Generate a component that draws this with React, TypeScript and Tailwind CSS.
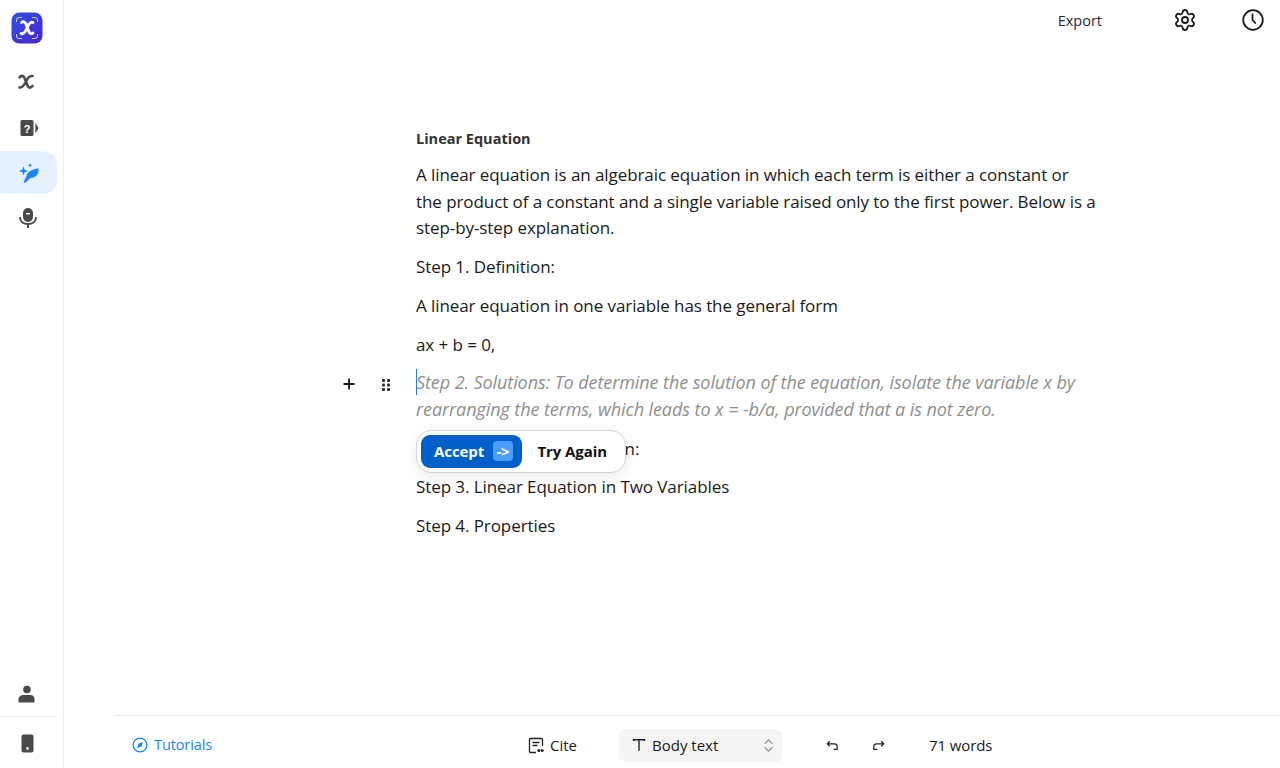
import { ChevronsUpDown, Settings } from "lucide-react";

const bodyFont = "font-['Open_Sans','Noto_Sans',sans-serif]";

function Logo() {
  return (
    <svg width="32" height="32" viewBox="0 0 32 32">
      <defs>
        <linearGradient id="logoFill" x1="0" y1="0" x2="1" y2="1">
          <stop offset="0" stopColor="#2f52e8" />
          <stop offset="1" stopColor="#4a22d0" />
        </linearGradient>
      </defs>
      <rect x="0.500" y="0.500" width="31" height="31" rx="8" fill="url(#logoFill)" />
      <path d="M5.500 10V8a2.500 2.500 0 0 1 2.500-2.500h3M21 5.500h3a2.500 2.500 0 0 1 2.500 2.500v2M26.500 22v2a2.500 2.500 0 0 1-2.500 2.500h-3M11 26.500H8a2.500 2.500 0 0 1-2.500-2.500v-2" fill="none" stroke="#c9d4ff" strokeWidth="1" />
      <path d="M10.500 10.500c2-1.500 3.500-.5 4.500 1.500l3 8c1 2 2.500 2 4 1M22 10.500c-2.500-1-4 .5-6 5.500s-3.500 6.500-6 5.500" fill="none" stroke="#fff" strokeWidth="2.800" strokeLinecap="round" />
    </svg>
  );
}

function SideButton({ active, children }: { active?: boolean; children: React.ReactNode }) {
  return (
    <div className={`w-[57px] h-[43px] flex items-center justify-center rounded-r-[14px] ${active ? "bg-[#e6f1ff]" : ""}`}>
      {children}
    </div>
  );
}

export default function App() {
  return (
    <div className={`flex h-screen w-full overflow-hidden bg-white text-[#1a1a1a] ${bodyFont}`}>
      {/* sidebar */}
      <aside className="w-16 shrink-0 border-r border-[#ededed] flex flex-col">
        <div className="h-[45px] pt-[12px] pl-[11px]">
          <Logo />
        </div>
        <div className="mt-[16px] flex flex-col gap-[2px]">
          <SideButton>
            <svg width="16" height="17" viewBox="0 0 16 17" className="-ml-[6px] -mt-[2px]">
              <path d="M1.500 4.500C3 2 5.500 2.500 6.500 5l3 7.500c1 2.500 3 3 5 .5M14.500 3C12 2.500 10.500 3.500 8 8.500s-4 6.500-6.500 6" fill="none" stroke="#4a4a4a" strokeWidth="2.600" strokeLinecap="round" />
            </svg>
          </SideButton>
          <SideButton>
            <svg width="19" height="18" viewBox="0 0 19 18" className="ml-[1px]">
              <rect x="0.500" y="1" width="13" height="16" rx="1.500" fill="#4a4a4a" />
              <text x="7" y="13.500" textAnchor="middle" fontSize="11" fontWeight="700" fill="#fff" fontFamily="Liberation Sans">?</text>
              <path d="M15 4c2 2 3 4 3.500 5-.5 1.500-1.500 3.500-3.500 5 .6-3 .6-7 0-10z" fill="#4a4a4a" />
            </svg>
          </SideButton>
          <SideButton active>
            <svg width="22" height="22" viewBox="0 0 22 22">
              <path d="M20.500 6.500c.5 6-3 9.500-8 9.500L7 21l-1.500-.8L8.300 14.500c.5-4.500 6-7.500 12.200-8z" fill="#1a86ff" />
              <path d="M5.500 4.500l1.200 3.300 3.300 1.200-3.300 1.200-1.200 3.300-1.200-3.300L1 9l3.300-1.200z" fill="#1a86ff" />
              <path d="M12 1l.6 1.700 1.700.6-1.700.6-.6 1.700-.6-1.700-1.700-.6 1.700-.6z" fill="#1a86ff" />
            </svg>
          </SideButton>
          <SideButton>
            <svg width="20" height="22" viewBox="0 0 20 22" className="-ml-[2px]">
              <rect x="5" y="1" width="10" height="14" rx="5" fill="#4a4a4a" />
              <rect x="8" y="6" width="4" height="1.400" fill="#fff" />
              <path d="M2 10c0 4 3 7 8 7s8-3 8-7" fill="none" stroke="#4a4a4a" strokeWidth="2" />
              <rect x="9" y="17" width="2" height="4" fill="#4a4a4a" />
            </svg>
          </SideButton>
        </div>
        <div className="mt-auto flex flex-col items-center w-[54px]">
          <div className="h-[46px] w-full flex items-center justify-center pt-[2px]">
            <svg width="18" height="18" viewBox="0 0 18 18">
              <circle cx="9" cy="4.500" r="3.800" fill="#4a4a4a" />
              <path d="M0.500 17.500v-3c0-3 2.500-4.500 5-4.500h7c2.500 0 4 1.500 4 4.500v3z" fill="#4a4a4a" />
            </svg>
          </div>
          <div className="w-[57px] self-start border-b border-[#ededed]" />
          <div className="h-[51px] w-full flex items-center justify-center pt-[2px]">
            <svg width="13" height="19" viewBox="0 0 13 19">
              <rect x="0.500" y="0.500" width="12" height="18" rx="2" fill="#4a4a4a" />
              <circle cx="6.500" cy="14.500" r="1.400" fill="#fff" />
            </svg>
          </div>
        </div>
      </aside>

      <main className="flex-1 min-w-0 flex flex-col">
        {/* top bar */}
        <header className="h-[40px] flex items-center justify-end pr-[15px] shrink-0">
          <span className="text-[14.500px] text-[#1f2a3a] mr-[71px] mt-[1px]">Export</span>
          <Settings size={24} strokeWidth={1.800} className="mr-[44px] text-[#1a1a1a]" />
          <svg width="24" height="24" viewBox="0 0 24 24" fill="none" stroke="#1a1a1a" strokeWidth="1.800" strokeLinecap="round">
            <circle cx="12" cy="12" r="9.800" />
            <path d="M11.500 6.500V12l2.800 3" />
          </svg>
        </header>

        {/* document */}
        <section className="flex-1 pl-[352px] pt-[86px] w-[1033px]">
          <h1 className="text-[14.500px] font-bold leading-[26px] text-[#333] mb-[10px]">Linear Equation</h1>
          <div className="text-[17px] tracking-[-0.08px] leading-[26.600px] flex flex-col gap-[12.200px]">
            <p>A linear equation is an algebraic equation in which each term is either a constant or the product of a constant and a single variable raised only to the first power. Below is a step-by-step explanation.</p>
            <p>Step 1. Definition:</p>
            <p>A linear equation in one variable has the general form</p>
            <p>ax + b = 0,</p>
            <div className="relative">
              <span className="absolute left-[-74px] top-[5px]">
                <svg width="14" height="14" viewBox="0 0 14 14" className="mt-[2px]">
                  <path d="M7 1.500v11M1.500 7h11" stroke="#1a1a1a" strokeWidth="1.800" />
                </svg>
              </span>
              <span className="absolute left-[-34px] top-[9px]">
                <svg width="8" height="12" viewBox="0 0 8 12" fill="#333">
                  <rect x="0" y="0" width="3" height="3" rx="0.800" />
                  <rect x="5" y="0" width="3" height="3" rx="0.800" />
                  <rect x="0" y="4.500" width="3" height="3" rx="0.800" />
                  <rect x="5" y="4.500" width="3" height="3" rx="0.800" />
                  <rect x="0" y="9" width="3" height="3" rx="0.800" />
                  <rect x="5" y="9" width="3" height="3" rx="0.800" />
                </svg>
              </span>
              <span className="absolute left-0 top-[-1px] w-px h-[26px] bg-[#2a7de1]" />
              <p className="italic text-[18px] text-[#8f8f8f] -mt-px mb-px">Step 2. Solutions: To determine the solution of the equation, isolate the variable x by rearranging the terms, which leads to x = -b/a, provided that a is not zero.</p>
            </div>
            <div className="relative">
              <p className="tracking-[0.1px]">Step 2. Finding the Solution:</p>
              <div className="absolute left-0 top-[-6px] w-[210px] h-[43px] bg-white border border-[#d4d4d4] rounded-[15px] shadow-[0_4px_12px_rgba(0,0,0,0.08)] flex items-center pl-[4px] pr-[18px] justify-between">
                <div className="h-[33px] w-[101px] bg-[#0060c9] rounded-[9px] flex items-center justify-between pl-[13px] pr-[9px] text-white text-[15px] font-bold">
                  <span>Accept</span>
                  <span className="w-[20px] h-[20px] rounded-[4px] bg-[#4b9dfb] flex items-center justify-center text-[15px] leading-none">-&gt;</span>
                </div>
                <span className="text-[15px] font-bold text-[#111]">Try Again</span>
              </div>
            </div>
            <p>Step 3. Linear Equation in Two Variables</p>
            <p>Step 4. Properties</p>
          </div>
        </section>

        {/* bottom bar */}
        <footer className="ml-[52px] h-[53px] shrink-0 border-t border-[#e8e8e8] flex items-center pt-[6px] text-[15px]">
          <div className="flex items-center gap-[6px] pl-[16px] w-[411px] text-[#1a86ff]">
            <svg width="16" height="16" viewBox="0 0 16 16" fill="none" stroke="#1a86ff" strokeWidth="1.400">
              <circle cx="8" cy="8" r="6.900" />
              <path d="M11 5l-1.500 4.500L5 11l1.500-4.500z" fill="#1a86ff" stroke="none" />
            </svg>
            <span className="text-[14.500px] tracking-[-0.1px]">Tutorials</span>
          </div>
          <div className="flex items-center gap-[6px] w-[92px] pl-[1px]">
            <svg width="16" height="17" viewBox="0 0 16 17" fill="none" stroke="#222" strokeWidth="1.300">
              <path d="M8 15.500H2.500a1 1 0 0 1-1-1v-12a1 1 0 0 1 1-1h11a1 1 0 0 1 1 1V9" />
              <path d="M4.500 5.500h7M4.500 8.500h5" />
              <circle cx="10.800" cy="13.500" r="1.500" fill="#222" stroke="none" />
              <circle cx="14.200" cy="13.500" r="1.500" fill="#222" stroke="none" />
            </svg>
            <span>Cite</span>
          </div>
          <div className="w-[163px] h-[33px] bg-[#f5f5f5] rounded-[7px] flex items-center pl-[13px] pr-[5px]">
            <svg width="14" height="14" viewBox="0 0 14 14" fill="none" stroke="#222" strokeWidth="1.400" className="mr-[6px]">
              <path d="M1.500 3V1.800h11V3M7 1.800v11" />
            </svg>
            <span>Body text</span>
            <ChevronsUpDown size={17} strokeWidth={1.800} className="ml-auto text-[#8a8a8a]" />
          </div>
          <svg width="12" height="11" viewBox="0 0 14 12" fill="none" stroke="#222" strokeWidth="1.400" className="ml-[44px]">
            <path d="M4.500 1L1.500 4l3 3M1.500 4H10a3 3 0 0 1 3 3v3.500H9" />
          </svg>
          <svg width="12" height="11" viewBox="0 0 14 12" fill="none" stroke="#222" strokeWidth="1.400" className="ml-[35px]">
            <path d="M9.500 1l3 3-3 3M12.500 4H4a3 3 0 0 0-3 3v3.500h4" />
          </svg>
          <span className="ml-[44px] tracking-[-0.1px]">71 words</span>
        </footer>
      </main>
    </div>
  );
}
